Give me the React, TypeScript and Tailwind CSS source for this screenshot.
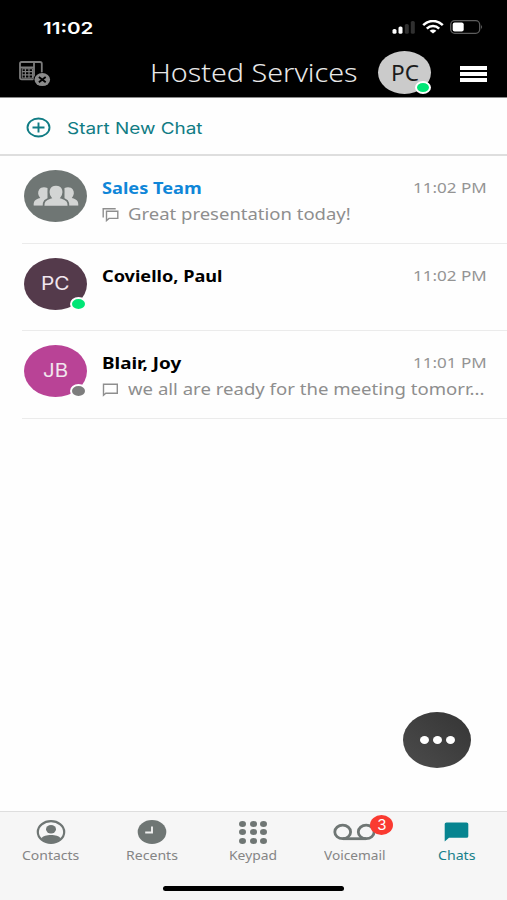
import { useLayoutEffect, useRef, useState } from "react";
import type { ReactNode } from "react";
import clsx from "clsx";

const chats = [
  { name: "Sales Team", time: "11:02 PM", message: "Great presentation today!", nameWidth: 100, messageWidth: 223, kind: "group" },
  { name: "Coviello, Paul", time: "11:02 PM", message: "", nameWidth: 120, messageWidth: 0, kind: "person", initials: "PC", color: "bg-[#543a4b]", presence: "bg-[#00e676]" },
  { name: "Blair, Joy", time: "11:01 PM", message: "we all are ready for the meeting tomorr...", nameWidth: 79, messageWidth: 356, kind: "person", initials: "JB", color: "bg-[#b94396]", presence: "bg-[#7d7d7d]" },
];

// Stretches a single line of text to the given width
function Fit({ width, className, children }: { width: number; className?: string; children: ReactNode }) {
  const ref = useRef<HTMLSpanElement>(null);
  const [scale, setScale] = useState(1);

  useLayoutEffect(() => {
    if (ref.current) setScale(width / ref.current.offsetWidth);
  }, [width]);

  return (
    <span className={clsx("block whitespace-nowrap", className)} style={{ width }}>
      <span ref={ref} className="inline-block origin-left" style={{ transform: `scaleX(${scale})` }}>
        {children}
      </span>
    </span>
  );
}

function StatusBar() {
  return (
    <div className="flex h-[50px] items-start justify-between pl-[43px] pr-[23px]">
      <Fit width={50} className="mt-[16px] font-['Inter',sans-serif] text-[16.5px] leading-6 font-semibold">
        11:02
      </Fit>
      <div className="mt-[20px] flex">
        <svg width="24" height="14" viewBox="0 0 24 14" fill="#fff">
          <rect x="0.5" y="9" width="4" height="4.8" rx="1.6" />
          <rect x="6.5" y="6.5" width="4" height="7.3" rx="1.6" />
          <rect x="12.8" y="4" width="4" height="9.8" rx="1.6" fill="#303030" />
          <rect x="18.8" y="1" width="4" height="12.8" rx="1.6" fill="#303030" />
        </svg>
        <svg className="ml-[6px]" width="22" height="14" viewBox="0 0 22 14" fill="none" stroke="#fff" strokeWidth="2.5">
          <path d="M1.2 5.200C6.800-.4 15.200-.4 20.800 5.200" />
          <path d="M4.800 8.600c3.500-3.400 8.900-3.400 12.400 0" />
          <path d="M7.600 10.800c2-1.700 4.800-1.700 6.800 0L11 13.600z" fill="#fff" stroke="none" />
        </svg>
        <svg className="ml-[6px]" width="34" height="14" viewBox="0 0 34 14">
          <rect x="0.7" y="0.7" width="29" height="12.6" rx="4" fill="none" stroke="#5d5d5d" strokeWidth="1.3" />
          <rect x="2.700" y="2.600" width="11" height="9" rx="2" fill="#fff" />
          <path d="M31.200 4.800q1.800 2.200 0 4.400z" fill="#777" />
        </svg>
      </div>
    </div>
  );
}

function PhoneOffIcon() {
  return (
    <svg width="33" height="28" viewBox="0 0 33 28" fill="none" stroke="#7c7c7c" strokeWidth="1.8">
      <path d="M3.500 2H22q1.800 0 1.800 1.600V13M16 2v16q0 1.300-1.300 1.300H3.800Q2 19.300 2 17.800V3.400Q2 2 3.500 2zM2 7.500h14" />
      <path d="M4.200 8.800h10.300V18H4.200z" strokeWidth="1" />
      <path d="M7.400 8.500V18M11 8.500V18M4 11.600h10.500M4 14.800h10.500" strokeWidth="1.2" />
      <ellipse cx="24.300" cy="19.600" rx="8.700" ry="7.400" fill="#000" stroke="none" />
      <ellipse cx="24.300" cy="19.600" rx="7.800" ry="6.500" fill="#8b8b8b" stroke="none" />
      <path d="M20.900 17l6.800 5.200M27.700 17l-6.800 5.200" stroke="#000" strokeWidth="1.900" />
    </svg>
  );
}

function Header() {
  return (
    <header className="h-[98px] border-b border-[#8a8a8a] bg-black text-white">
      <StatusBar />
      <div className="flex items-center">
        <div className="ml-[18px] w-[132px] pt-[4px]">
          <PhoneOffIcon />
        </div>
        <Fit width={208} className="text-[25px] leading-9 font-light text-[#e8e8e8]">
          Hosted Services
        </Fit>
        <div className="relative mt-[1px] ml-[20px] flex h-[43px] w-[53px] items-center justify-center rounded-[50%] bg-[#cbcbcb]">
          <Fit width={28} className="text-[21px] leading-8 text-[#1c1c1c]">PC</Fit>
          <span className="absolute right-0 bottom-0 h-[13px] w-[16px] rounded-[50%] border-2 border-white bg-[#00e676]" />
        </div>
        <div className="mt-[4px] ml-[29px] flex w-[27px] flex-col gap-[2px]">
          <span className="h-[4px] bg-white" />
          <span className="h-[4px] bg-white" />
          <span className="h-[4px] bg-white" />
        </div>
      </div>
    </header>
  );
}

function GroupIcon() {
  return (
    <svg width="46" height="22" viewBox="0 0 46 22" fill="#d3d5d4">
      <path id="side" d="M.7 20.800c-.2-4.500.9-6.300 6.500-7.900C4.800 10.500 4.500 7 6.200 4.600 7.700 2.300 11 1.700 14.500 3v17.800z" />
      <path d="M45.300 20.800c.2-4.500-.9-6.300-6.500-7.900 2.400-2.400 2.700-5.900 1-8.300C38.300 2.300 35 1.700 31.500 3v17.800z" />
      <path
        d="M10.600 22c-.3-5.800 1.200-7.400 7.200-9.300C14.300 8.400 15-.2 23-.2s8.700 8.600 5.200 12.900c6 1.900 7.500 3.500 7.200 9.300z"
        stroke="#6f7674"
        strokeWidth="1.700"
      />
      <path d="M0 20.800h46V22H0z" fill="#6f7674" />
    </svg>
  );
}

function MessageIcon({ group }: { group: boolean }) {
  return (
    <svg width="17" height="15" viewBox="0 0 17 15" fill="none" stroke="#8e8e8e" strokeWidth="1.4">
      {group ? (
        <path d="M1.200 10.500V1.700h12.500M4.500 4.200h11.300v7.200H7l-2.500 2.200z" />
      ) : (
        <path d="M1.500 2.200h13.800v9H3.800l-2.300 2z" />
      )}
    </svg>
  );
}

function ChatRow({ chat }: { chat: (typeof chats)[number] }) {
  const group = chat.kind === "group";
  return (
    <li className="flex h-[87.5px] pl-[22px]">
      <div className="flex flex-1 border-b border-[#ebebeb] pr-[20px] pl-[2px]">
        <div className={clsx("relative mt-[14px] flex h-[52px] w-[63px] shrink-0 items-center justify-center rounded-[50%]", group ? "bg-[#6f7674]" : chat.color)}>
          {group ? (
            <GroupIcon />
          ) : (
            <>
              <Fit width={chat.initials === "PC" ? 29 : 25} className="font-['Inter',sans-serif] text-[18px] leading-6 text-[#f1e6ee]">
                {chat.initials}
              </Fit>
              <span className={clsx("absolute right-0 -bottom-[1px] h-[14px] w-[17px] rounded-[50%] border-[2.500px] border-[#fefefe]", chat.presence)} />
            </>
          )}
        </div>
        <div className="ml-[15px] flex-1 pt-[20px]">
          <div className="flex justify-between leading-6">
            <Fit width={chat.nameWidth} className={clsx("text-[16px] font-bold", group ? "text-[#0f86d8]" : "text-black")}>
              {chat.name}
            </Fit>
            <Fit width={74} className="-mt-[1px] text-[14.500px] text-[#949494]">{chat.time}</Fit>
          </div>
          {chat.message && (
            <div className="flex items-center text-[#8e8e8e]">
              <MessageIcon group={group} />
              <Fit width={chat.messageWidth} className="ml-[9px] text-[17px] leading-7">{chat.message}</Fit>
            </div>
          )}
        </div>
      </div>
    </li>
  );
}

function ContactsIcon() {
  return (
    <svg width="30" height="24" viewBox="0 0 30 24" fill="#6f7674">
      <ellipse cx="15" cy="12" rx="13.200" ry="10.800" fill="none" stroke="#6f7674" strokeWidth="2.200" />
      <ellipse cx="15" cy="9.300" rx="5" ry="4.200" />
      <path d="M5.500 18.200c2.500-4.200 16.500-4.200 19 0-4.500 5.600-14.500 5.600-19 0z" />
    </svg>
  );
}

function RecentsIcon() {
  return (
    <svg width="30" height="24" viewBox="0 0 30 24">
      <ellipse cx="15" cy="12" rx="14.300" ry="11.900" fill="#6f7674" />
      <path d="M15 6.500v6H8.200" fill="none" stroke="#f0f0f0" strokeWidth="1.900" />
    </svg>
  );
}

function KeypadIcon() {
  return (
    <div className="grid grid-cols-3 gap-x-[3.500px] gap-y-[2.500px]">
      {Array.from({ length: 9 }, (_, i) => (
        <span key={i} className="h-[6px] w-[7px] rounded-[50%] bg-[#6f7674]" />
      ))}
    </div>
  );
}

function VoicemailIcon() {
  return (
    <svg width="43" height="18" viewBox="0 0 43 18" fill="none" stroke="#6f7674" strokeWidth="2.800">
      <ellipse cx="9.700" cy="8.900" rx="7.900" ry="6.800" />
      <ellipse cx="33.200" cy="8.900" rx="7.900" ry="6.800" />
      <path d="M9.700 15.700h23.500" />
    </svg>
  );
}

function ChatsIcon() {
  return (
    <svg width="25" height="20" viewBox="0 0 25 20" fill="#078490">
      <path d="M2.500.5h20q1.800 0 1.800 1.600v12.200q0 1.500-1.800 1.500H5L.7 19.500V2.100Q.7.5 2.500.5z" />
    </svg>
  );
}

const tabs = [
  { label: "Contacts", width: 57, icon: <ContactsIcon /> },
  { label: "Recents", width: 52, icon: <RecentsIcon /> },
  { label: "Keypad", width: 48, icon: <KeypadIcon /> },
  { label: "Voicemail", width: 62, icon: <VoicemailIcon />, badge: "3" },
  { label: "Chats", width: 37, icon: <ChatsIcon />, active: true },
];

export default function App() {
  return (
    <div className="flex h-[900px] w-[507px] flex-col overflow-hidden bg-[#fefefe] font-['Noto_Sans',sans-serif]">
      <Header />
      <button type="button" className="flex h-[58px] items-center border-b-2 border-[#dedede] pt-[3px] pl-[26px] text-[#107c84]">
        <svg width="25" height="21" viewBox="0 0 25 21" fill="none" stroke="currentColor" strokeWidth="1.900">
          <ellipse cx="12.500" cy="10.500" rx="11" ry="9" />
          <path d="M12.500 5.500v10M6.500 10.500h12" />
        </svg>
        <Fit width={136} className="ml-[16px] text-left font-['Inter',sans-serif] text-[16px] leading-6">
          Start New Chat
        </Fit>
      </button>

      <ul>
        {chats.map((chat) => (
          <ChatRow key={chat.name} chat={chat} />
        ))}
      </ul>

      <button
        type="button"
        className="mt-auto mr-[36px] mb-[43px] flex h-[56px] w-[68px] items-center justify-center gap-[4px] self-end rounded-[50%] bg-linear-to-bl from-[#353535] to-[#4c4c4c]"
        aria-label="More"
      >
        <span className="h-[8px] w-[9px] rounded-[50%] bg-white" />
        <span className="h-[8px] w-[9px] rounded-[50%] bg-white" />
        <span className="h-[8px] w-[9px] rounded-[50%] bg-white" />
      </button>

      <nav className="flex h-[89px] flex-col border-t border-[#dedede] bg-[#f6f6f6]">
        <div className="grid grid-cols-5">
          {tabs.map((tab) => (
            <div key={tab.label} className={clsx("flex flex-col items-center", tab.active ? "text-[#16808a]" : "text-[#858585]")}>
              <div className="relative mt-[6px] flex h-[28px] items-center">
                {tab.icon}
                {tab.badge && (
                  <span className="absolute -top-[3px] -right-[17px] flex h-[20px] w-[23px] items-center justify-center rounded-[50%] bg-[#fa3a31] font-['Inter',sans-serif] text-[15px] text-white">
                    {tab.badge}
                  </span>
                )}
              </div>
              <Fit width={tab.width} className="text-[13px] leading-[18px]">{tab.label}</Fit>
            </div>
          ))}
        </div>
        <div className="mx-auto mt-auto mb-[9px] h-[5px] w-[181px] rounded-full bg-black" />
      </nav>
    </div>
  );
}
